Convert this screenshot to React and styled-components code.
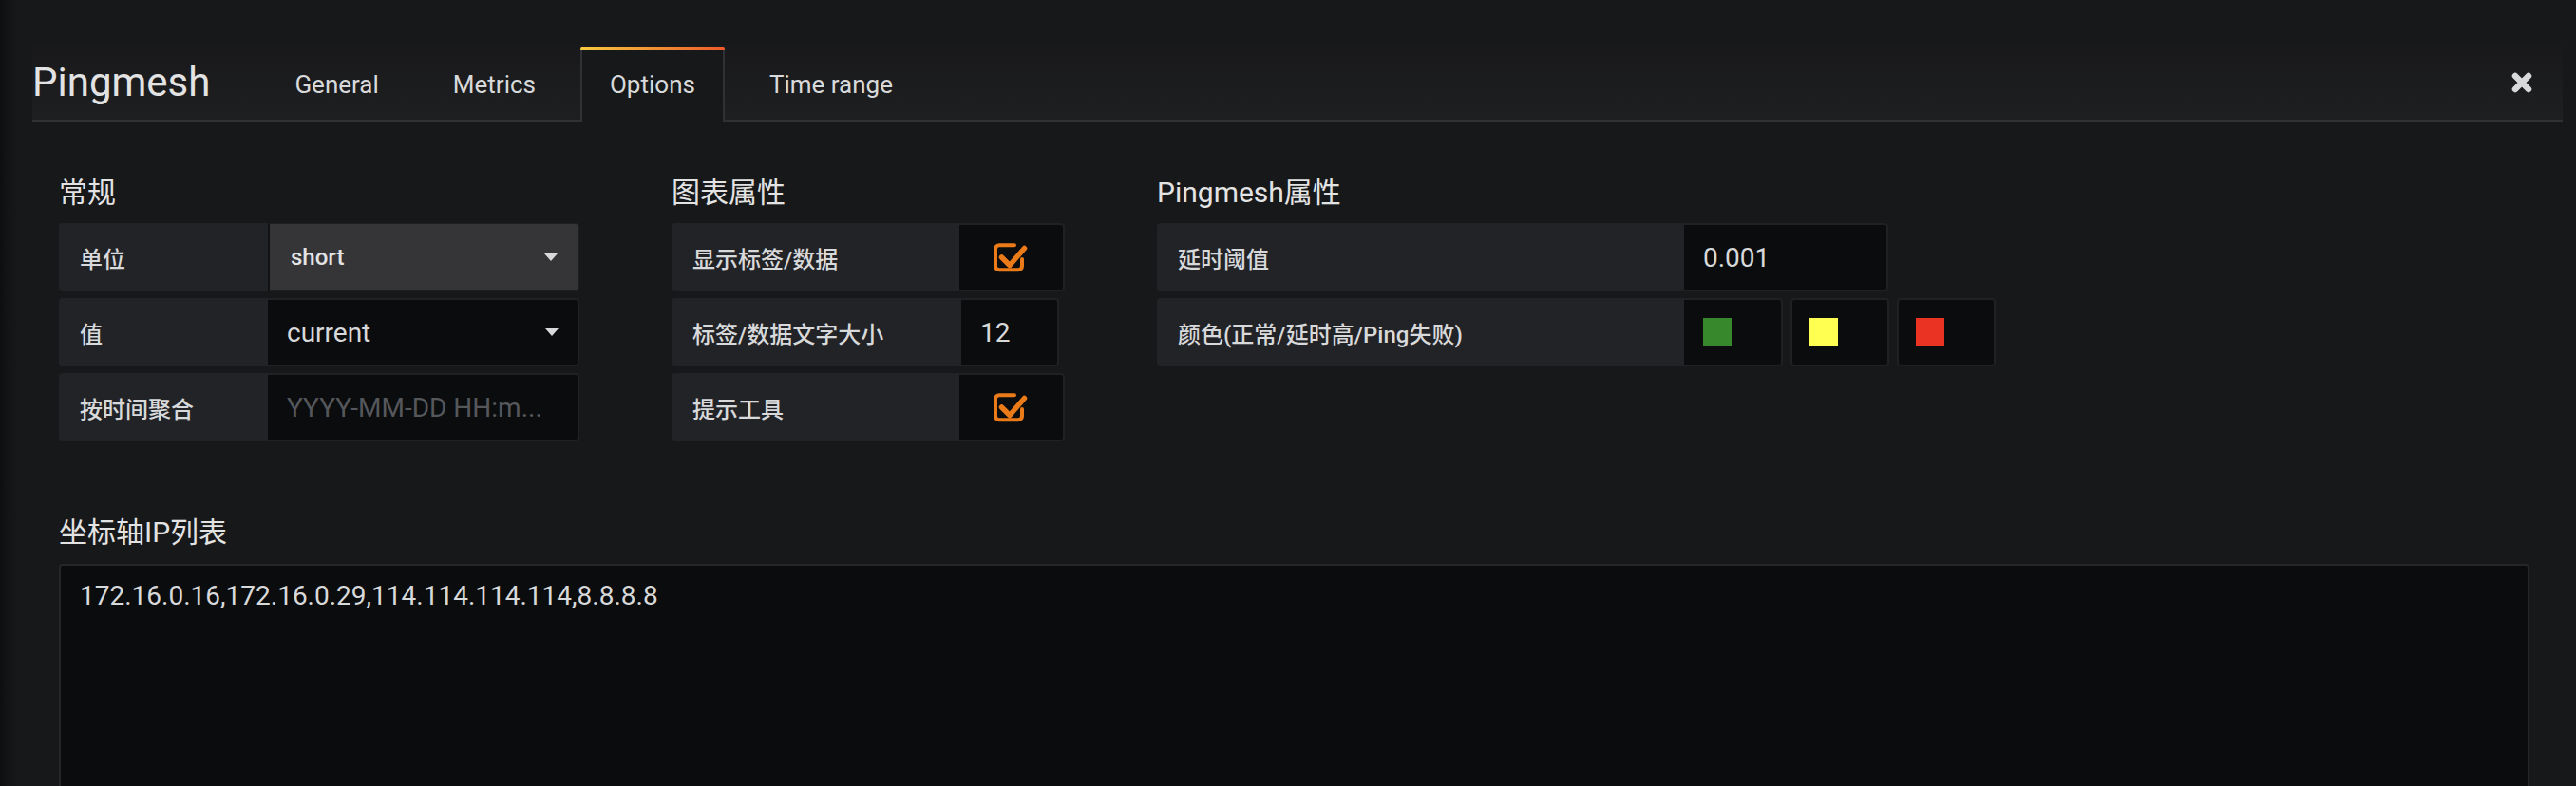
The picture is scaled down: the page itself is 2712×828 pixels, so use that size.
import React from 'react';
import styled, { createGlobalStyle } from 'styled-components';

const GlobalStyle = createGlobalStyle`
  html, body { margin: 0; padding: 0; background: #17181a; }
  body {
    font-family: Roboto, "Noto Sans CJK SC", "Noto Sans", sans-serif;
    color: #d8d9da;
  }
  * { box-sizing: border-box; }
`;

const Page = styled.div`
  min-height: 828px;
  height: 828px;
  overflow: hidden;
  padding: 47px 14px 0 34px;
  background: linear-gradient(to right, #0d0e10 0px, #131416 8px, #17181a 20px);
`;

const Header = styled.div`
  display: flex;
  align-items: center;
  height: 81px;
  background: linear-gradient(to bottom, #19191c, #1e1f21);
  border-bottom: 2px solid #303134;
`;

const Title = styled.h1`
  margin: 0 58px 0 0;
  font-size: 42px;
  font-weight: 400;
  line-height: 1;
  color: #e3e3e3;
`;

const Tabs = styled.div`
  display: flex;
  align-self: stretch;
  align-items: flex-end;
`;

const Tab = styled.div`
  position: relative;
  display: flex;
  align-items: center;
  height: 79px;
  margin: 0 16px -2px 0;
  padding: 0 29px;
  font-size: 26px;
  color: #d8d9da;
  border-left: 2px solid ${(p) => (p.$active ? '#303134' : 'transparent')};
  border-right: 2px solid ${(p) => (p.$active ? '#303134' : 'transparent')};
  background: ${(p) => (p.$active ? '#17181a' : 'transparent')};
  border-radius: 4px 4px 0 0;
  &::before {
    content: '';
    display: ${(p) => (p.$active ? 'block' : 'none')};
    position: absolute;
    top: 0;
    left: -2px;
    right: -2px;
    height: 4px;
    border-radius: 4px 4px 0 0;
    background: linear-gradient(to right, #f7cb3f 0%, #f29334 50%, #ee5a2a 100%);
  }
`;

const Close = styled.div`
  margin-left: auto;
  margin-right: 32px;
  display: flex;
  align-items: center;
  padding-top: 1px;
`;

const Content = styled.div`
  padding: 57px 35px 0 28px;
`;

const Sections = styled.div`
  display: flex;
  align-items: flex-start;
  gap: 97px;
`;

const Section = styled.div`
  width: ${(p) => p.$w}px;
  flex: none;
`;

const SectionTitle = styled.h5`
  margin: ${(p) => p.$mt || 0}px 0 ${(p) => p.$mb || 14}px;
  font-size: 30px;
  line-height: 36px;
  font-weight: 400;
  color: #e3e3e3;
`;

const Row = styled.div`
  display: flex;
  height: 72px;
  margin-bottom: 7px;
`;

const Label = styled.div`
  flex: none;
  width: ${(p) => p.$w}px;
  display: flex;
  align-items: center;
  padding-left: 22px;
  background: #222327;
  border-radius: 4px 0 0 4px;
  font-size: 24px;
  font-weight: 500;
  color: #d8d9da;
  white-space: nowrap;
`;

const Field = styled.div`
  flex: none;
  width: ${(p) => p.$w}px;
  display: flex;
  align-items: center;
  justify-content: space-between;
  padding: 0 20px;
  background: #0b0c0e;
  border: 2px solid #202124;
  border-left: none;
  border-radius: 0 4px 4px 0;
  font-size: 28px;
  color: ${(p) => (p.$placeholder ? '#55575b' : '#d8d9da')};
  white-space: nowrap;
  overflow: hidden;
`;

const SelectBox = styled.div`
  flex: none;
  width: ${(p) => p.$w}px;
  display: flex;
  align-items: center;
  justify-content: space-between;
  padding: 0 22px 0 22px;
  background: #353537;
  border: 1px solid #1e1f21;
  border-left: 2px solid #121214;
  border-radius: 0 4px 4px 0;
  font-size: 24px;
  font-weight: 500;
  color: #e3e3e3;
`;

const CheckCell = styled.div`
  flex: none;
  width: ${(p) => p.$w}px;
  display: flex;
  align-items: center;
  padding-left: 36px;
  background: #0b0c0e;
  border: 2px solid #202124;
  border-left: none;
  border-radius: 0 4px 4px 0;
`;

const ColorCells = styled.div`
  display: flex;
  gap: 8px;
`;

const ColorCell = styled.div`
  width: 104px;
  display: flex;
  align-items: center;
  padding-left: 18px;
  background: #0b0c0e;
  border: 2px solid #202124;
  border-radius: 4px;
  &:first-child {
    border-left: none;
    border-radius: 0 4px 4px 0;
    padding-left: 20px;
  }
`;

const Swatch = styled.span`
  width: 30px;
  height: 30px;
  background: ${(p) => p.$c};
`;

const IpArea = styled.textarea`
  display: block;
  width: 100%;
  height: 280px;
  margin: 0;
  padding: 15px 20px;
  background: #0b0c0e;
  border: 2px solid #262628;
  border-radius: 4px;
  color: #d8d9da;
  font-family: Roboto, "Noto Sans CJK SC", sans-serif;
  font-size: 28px;
  line-height: 34px;
  resize: none;
  outline: none;
`;

const Caret = () => (
  <svg width="14" height="8" viewBox="0 0 14 8">
    <path d="M0 0 H14 L7 8 Z" fill="#d8d9da" />
  </svg>
);

const CloseIcon = () => (
  <svg width="22" height="22" viewBox="0 0 22 22">
    <path d="M4 4 L18 18 M18 4 L4 18" stroke="#d8d9da" strokeWidth="6.5" strokeLinecap="round" />
  </svg>
);

const CheckIcon = () => (
  <svg width="36" height="32" viewBox="0 0 36 32" fill="none">
    <path
      d="M22 3.3 H6 a4 4 0 0 0 -4 4 V25.3 a4 4 0 0 0 4 4 H26 a4 4 0 0 0 4 -4 V18"
      stroke="#eb7b18"
      strokeWidth="4"
      strokeLinecap="round"
    />
    <path d="M8.5 16 L17 24.5 L32.5 6.5" stroke="#eb7b18" strokeWidth="5.5" strokeLinecap="round" strokeLinejoin="round" />
  </svg>
);

export default function App() {
  return (
    <>
      <GlobalStyle />
      <Page>
        <Header>
          <Title>Pingmesh</Title>
          <Tabs>
            <Tab>General</Tab>
            <Tab>Metrics</Tab>
            <Tab $active>Options</Tab>
            <Tab>Time range</Tab>
          </Tabs>
          <Close>
            <CloseIcon />
          </Close>
        </Header>
        <Content>
          <Sections>
            <Section $w={548}>
              <SectionTitle>常规</SectionTitle>
              <Row>
                <Label $w={220}>单位</Label>
                <SelectBox $w={328}>
                  short
                  <Caret />
                </SelectBox>
              </Row>
              <Row>
                <Label $w={220}>值</Label>
                <Field $w={328}>
                  current
                  <Caret />
                </Field>
              </Row>
              <Row>
                <Label $w={220}>按时间聚合</Label>
                <Field $w={328} $placeholder>
                  YYYY-MM-DD HH:m...
                </Field>
              </Row>
            </Section>
            <Section $w={414}>
              <SectionTitle>图表属性</SectionTitle>
              <Row>
                <Label $w={303}>显示标签/数据</Label>
                <CheckCell $w={111}>
                  <CheckIcon />
                </CheckCell>
              </Row>
              <Row>
                <Label $w={305}>标签/数据文字大小</Label>
                <Field $w={103}>12</Field>
              </Row>
              <Row>
                <Label $w={303}>提示工具</Label>
                <CheckCell $w={111}>
                  <CheckIcon />
                </CheckCell>
              </Row>
            </Section>
            <Section $w={883}>
              <SectionTitle>Pingmesh属性</SectionTitle>
              <Row>
                <Label $w={555}>延时阈值</Label>
                <Field $w={215}>0.001</Field>
              </Row>
              <Row>
                <Label $w={555}>颜色(正常/延时高/Ping失败)</Label>
                <ColorCells>
                  <ColorCell>
                    <Swatch $c="#37872d" />
                  </ColorCell>
                  <ColorCell>
                    <Swatch $c="#ffff52" />
                  </ColorCell>
                  <ColorCell>
                    <Swatch $c="#ea3323" />
                  </ColorCell>
                </ColorCells>
              </Row>
            </Section>
          </Sections>
          <SectionTitle $mt={71} $mb={15}>坐标轴IP列表</SectionTitle>
          <IpArea readOnly defaultValue="172.16.0.16,172.16.0.29,114.114.114.114,8.8.8.8" />
        </Content>
      </Page>
    </>
  );
}
